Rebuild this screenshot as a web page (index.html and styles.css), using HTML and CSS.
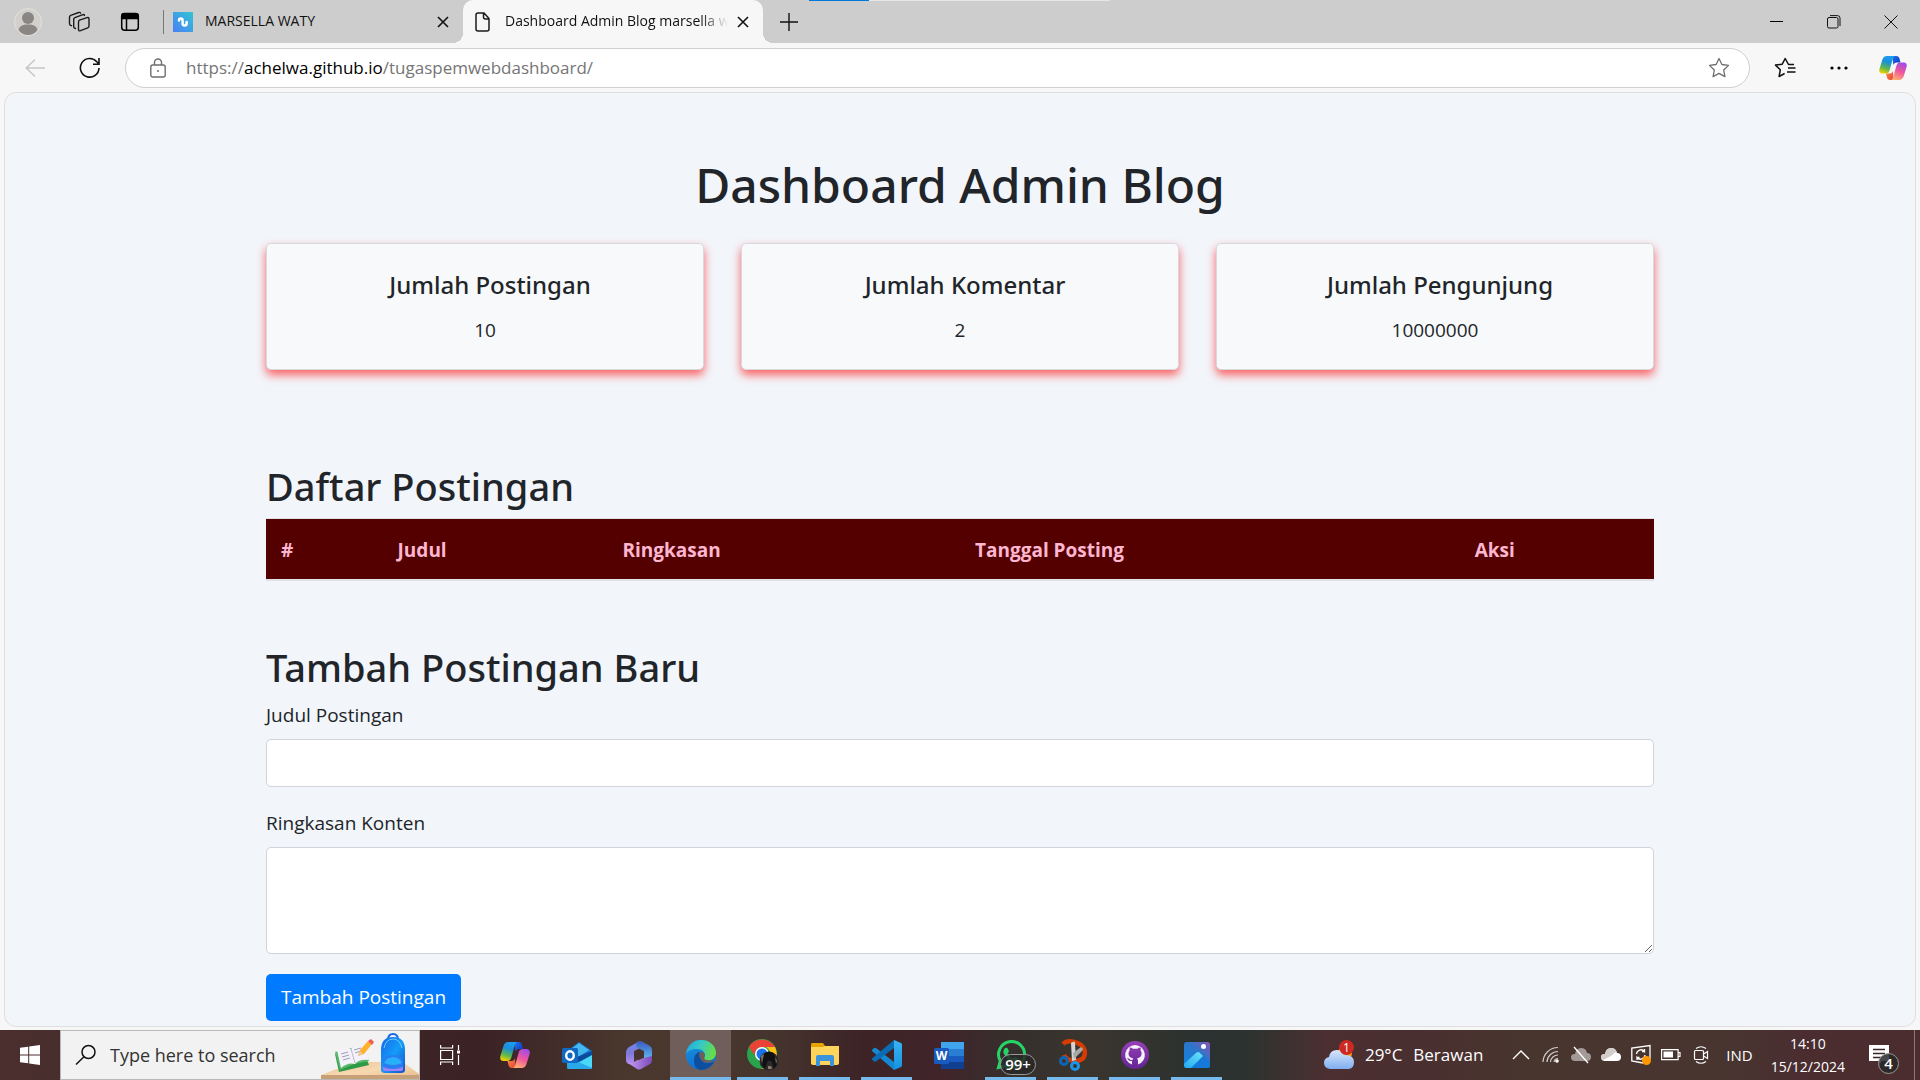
FILE: index.html
```html
<!DOCTYPE html>
<html lang="id">
<head>
<meta charset="utf-8">
<meta name="viewport" content="width=device-width, initial-scale=1">
<title>Dashboard Admin Blog marsella waty</title>
<link rel="stylesheet" href="styles.css">
</head>
<body>
<svg class="defs" aria-hidden="true">
  <defs>
    <linearGradient id="cpA" x1="0.6" y1="0" x2="0.3" y2="1"><stop offset="0" stop-color="#1a9df0"/><stop offset="0.35" stop-color="#1b8fd8"/><stop offset="0.7" stop-color="#5fb84c"/><stop offset="1" stop-color="#f7d000"/></linearGradient>
    <linearGradient id="cpB" x1="0.7" y1="0" x2="0.3" y2="1"><stop offset="0" stop-color="#a04be8"/><stop offset="0.5" stop-color="#f0569c"/><stop offset="1" stop-color="#ffb070"/></linearGradient>
    <linearGradient id="cpC" x1="0" y1="0" x2="1" y2="1"><stop offset="0" stop-color="#2277ee"/><stop offset="1" stop-color="#0a2fc0"/></linearGradient>
    <linearGradient id="cpD" x1="0" y1="0" x2="1" y2="1"><stop offset="0" stop-color="#ff8a3c"/><stop offset="1" stop-color="#e8433c"/></linearGradient>
    <symbol id="copilot" viewBox="0 0 30 28">
      <path d="M14 1h4.500c2 0 3 1 3.500 3l1 4h-4c-2 0-3 1-3.500 3z" fill="url(#cpC)"/>
      <path d="M15.500 27H12c-2 0-3-1-3.500-3l-1-4h4c2 0 3-1 3.500-3z" fill="url(#cpD)"/>
      <path d="M8.500 1H17c-1.500 1-2 2-2.500 4l-3 11c-.8 3-2 4-4.500 4H3.500C.8 20-.4 18 .4 15L3.500 5C4.300 2.500 6 1 8.500 1z" fill="url(#cpA)"/>
      <path d="M21.500 27H13c1.500-1 2-2 2.500-4l3-11c.8-3 2-4 4.500-4h3.500c2.700 0 3.900 2 3.100 5l-3.100 10c-.8 2.500-2.500 4-5 4z" fill="url(#cpB)"/>
    </symbol>
    <linearGradient id="fav" x1="1" y1="0" x2="0" y2="1"><stop offset="0" stop-color="#31c4d4"/><stop offset="1" stop-color="#4a7ff5"/></linearGradient>
    <linearGradient id="edA" x1="0" y1="0" x2="1" y2="0.3"><stop offset="0" stop-color="#1ea5e0"/><stop offset="0.5" stop-color="#34c8c8"/><stop offset="1" stop-color="#64dc4c"/></linearGradient>
    <linearGradient id="edB" x1="0" y1="0" x2="0.4" y2="1"><stop offset="0" stop-color="#1a94e0"/><stop offset="1" stop-color="#0c6fd0"/></linearGradient>
    <linearGradient id="m3A" x1="0" y1="0" x2="0" y2="1"><stop offset="0" stop-color="#6f86e8"/><stop offset="0.5" stop-color="#7f78dc"/><stop offset="1" stop-color="#b890f0"/></linearGradient>
    <linearGradient id="m3B" x1="0" y1="0" x2="0" y2="1"><stop offset="0" stop-color="#3a58c0"/><stop offset="1" stop-color="#62c4f4"/></linearGradient>
    <linearGradient id="m3C" x1="0" y1="0" x2="1" y2="0"><stop offset="0" stop-color="#c89af4"/><stop offset="1" stop-color="#7a4ab8"/></linearGradient>
    <linearGradient id="vs" x1="0" y1="0" x2="0" y2="1"><stop offset="0" stop-color="#3bb4f4"/><stop offset="1" stop-color="#1592e0"/></linearGradient>
    <linearGradient id="gh" x1="0" y1="0" x2="0" y2="1"><stop offset="0" stop-color="#9640b8"/><stop offset="1" stop-color="#642494"/></linearGradient>
    <linearGradient id="phA" x1="0" y1="1" x2="1" y2="0"><stop offset="0" stop-color="#0b86e0"/><stop offset="0.6" stop-color="#2f74c8"/><stop offset="1" stop-color="#8a55b8"/></linearGradient>
    <linearGradient id="phB" x1="0" y1="1" x2="1" y2="0"><stop offset="0" stop-color="#22a8f0"/><stop offset="1" stop-color="#6ce4fc"/></linearGradient>
    <linearGradient id="cl" x1="0" y1="0" x2="0" y2="1"><stop offset="0" stop-color="#d8e6fc"/><stop offset="1" stop-color="#80aef0"/></linearGradient>
    <linearGradient id="bag" x1="0" y1="0" x2="1" y2="1"><stop offset="0" stop-color="#1666e8"/><stop offset="0.5" stop-color="#149cf8"/><stop offset="1" stop-color="#1450c8"/></linearGradient>
    <linearGradient id="desk" x1="0" y1="0" x2="1" y2="1"><stop offset="0" stop-color="#e8c49c"/><stop offset="0.5" stop-color="#f8d8b0"/><stop offset="1" stop-color="#e4b888"/></linearGradient>
  </defs>
</svg>

<header class="browser">
  <div class="tabstrip">
    <div class="load-line"></div>
    <div class="tools">
      <button class="tool" aria-label="Profile"><svg width="28" height="28" viewBox="0 0 28 28"><circle cx="14" cy="14" r="13.500" fill="#d2d0cd" stroke="#e4e2d8"/><circle cx="14" cy="10" r="6" fill="#8a8684"/><path d="M4.500 22c1-4 4-5.500 9.500-5.500s8.500 1.500 9.500 5.500C21 25.500 18 27 14 27s-7-1.500-9.500-5z" fill="#8a8684"/></svg></button>
      <button class="tool" aria-label="Workspaces"><svg width="22" height="22" viewBox="0 0 22 22" fill="none" stroke="#1b1b1b" stroke-width="1.400" stroke-linejoin="round" stroke-linecap="round"><path d="M11.500 9.200l7.500-2.600q2-.6 2 1.300v7q0 1.400-1.300 1.900l-7.200 2.900q-2 .7-2-1.400v-6.900q0-1.600 1-2.200zM7.500 17.500l-1-.4q-.8-.3-.8-1.700V8.600q0-1.500 1.200-2l8-3q1.500-.5 1.500.8M3.500 14.700l-1-.4q-1-.4-1-1.800V6.300q0-1.500 1.200-2l8-2.800q1.500-.5 1.800.6"/></svg></button>
      <button class="tool" aria-label="Tab actions"><svg width="20" height="20" viewBox="0 0 20 20" fill="none" stroke="#000" stroke-width="1.500"><rect x="1.700" y="1.700" width="16.600" height="16.600" rx="3"/><path d="M6.500 6v12"/><path d="M1.700 6.500V4q0-2.500 2.500-2.500h11.600q2.500 0 2.500 2.500v2.500z" fill="#000"/></svg></button>
    </div>
    <div class="tab">
      <svg width="20" height="20" viewBox="0 0 20 20"><path d="M0 0h20v20H0z" fill="url(#fav)"/><path d="M6 8.500q0-2 1.800-2t1.800 2v3q0 2 2 2t2-2v-1.500" fill="none" stroke="#fff" stroke-width="2.500" stroke-linecap="round"/></svg>
      <span class="tab-title">MARSELLA WATY</span>
      <button class="tab-close" aria-label="Close tab"><svg width="12" height="12" viewBox="0 0 12 12" stroke="#111" stroke-width="1.600"><path d="M1 1l10 10M11 1L1 11"/></svg></button>
    </div>
    <div class="tab tab-active">
      <svg width="20" height="20" viewBox="0 0 20 20" fill="none" stroke="#1b1b1b" stroke-width="1.500"><path d="M5 1h6l5 5.500V17q0 2-2 2H5q-2 0-2-2V3q0-2 2-2zM10.500 1v4q0 2 2 2H16" stroke-linejoin="round"/></svg>
      <span class="tab-title">Dashboard Admin Blog marsella waty</span>
      <button class="tab-close" aria-label="Close tab"><svg width="12" height="12" viewBox="0 0 12 12" stroke="#111" stroke-width="1.600"><path d="M1 1l10 10M11 1L1 11"/></svg></button>
    </div>
    <button class="new-tab" aria-label="New tab"><svg width="18" height="18" viewBox="0 0 18 18" stroke="#111" stroke-width="1.400"><path d="M9 0v18M0 9h18"/></svg></button>
    <div class="window-buttons">
      <button aria-label="Minimize"><svg width="14" height="14" viewBox="0 0 14 14"><path d="M0 6.500h13" stroke="#000"/></svg></button>
      <button aria-label="Restore"><svg width="14" height="14" viewBox="0 0 14 14" fill="none" stroke="#111"><rect x=".5" y="2.500" width="10.500" height="10.500" rx="1.500"/><path d="M3 .6h7.500q2.500 0 2.500 2.500v8"/></svg></button>
      <button aria-label="Close"><svg width="14" height="14" viewBox="0 0 14 14" stroke="#111"><path d="M.5.5l13 13M13.500.5l-13 13"/></svg></button>
    </div>
  </div>
  <div class="toolbar">
    <button class="nav" aria-label="Back"><svg width="20" height="20" viewBox="0 0 20 20" fill="none" stroke="#c6c6c6" stroke-width="1.400"><path d="M20 10H1M10 1.500L1.200 10l8.800 8.500"/></svg></button>
    <button class="nav" aria-label="Refresh"><svg width="22" height="22" viewBox="0 0 22 22" fill="none" stroke="#111" stroke-width="1.600"><path d="M20 11a9.300 9.300 0 1 1-2.200-6.200L20 7M20 1v6.200h-6"/></svg></button>
    <div class="address">
      <svg width="16" height="20" viewBox="0 0 16 20" fill="none" stroke="#6e6e6e" stroke-width="1.400"><rect x=".8" y="7" width="14.400" height="12" rx="2"/><path d="M4.500 7V4.500a3.500 3.500 0 0 1 7 0V7"/><circle cx="8" cy="13" r="1" fill="#6e6e6e" stroke="none"/></svg>
      <div class="url" role="textbox" aria-label="Address">https://<span class="url-host">achelwa.github.io</span>/tugaspemwebdashboard/</div>
      <button class="star" aria-label="Add to favorites"><svg width="22" height="22" viewBox="0 0 22 22" fill="none" stroke="#6e6e6e" stroke-width="1.300" stroke-linejoin="round"><path d="M11 1.500l2.900 6 6.600.9-4.800 4.600 1.200 6.600L11 16.400l-5.900 3.200 1.200-6.600L1.500 8.400l6.600-.9z"/></svg></button>
    </div>
    <button class="side" aria-label="Favorites"><svg width="22" height="22" viewBox="0 0 22 22" fill="none" stroke="#111" stroke-width="1.500" stroke-linejoin="round"><path d="M20 7.500h-5.500L11.200 1.500 8.200 7.200l-6.700.9 4.800 4.700-1.200 6.700 5.500-3M14 11h7.500M13 15h8.500"/></svg></button>
    <button class="side" aria-label="Settings and more"><svg width="18" height="4" viewBox="0 0 18 4"><circle cx="2" cy="2" r="1.600"/><circle cx="9" cy="2" r="1.600"/><circle cx="16" cy="2" r="1.600"/></svg></button>
    <button class="side" aria-label="Copilot"><svg width="28" height="26"><use href="#copilot"/></svg></button>
  </div>
</header>

<div class="viewport">
  <main class="page">
    <h1>Dashboard Admin Blog</h1>
    <section class="stats">
      <article class="card"><h5>Jumlah Postingan</h5><p>10</p></article>
      <article class="card"><h5>Jumlah Komentar</h5><p>2</p></article>
      <article class="card"><h5>Jumlah Pengunjung</h5><p>10000000</p></article>
    </section>
    <section class="posts">
      <h2>Daftar Postingan</h2>
      <table>
        <colgroup><col class="col-no"><col class="col-title"><col class="col-summary"><col class="col-date"><col></colgroup>
        <thead><tr><th scope="col">#</th><th scope="col">Judul</th><th scope="col">Ringkasan</th><th scope="col">Tanggal Posting</th><th scope="col">Aksi</th></tr></thead>
      </table>
    </section>
    <section>
      <h2>Tambah Postingan Baru</h2>
      <form>
        <div class="field"><label for="judul">Judul Postingan</label><input type="text" id="judul"></div>
        <div class="field"><label for="ringkasan">Ringkasan Konten</label><textarea id="ringkasan" rows="3"></textarea></div>
        <button class="submit" type="submit">Tambah Postingan</button>
      </form>
    </section>
  </main>
</div>

<footer class="taskbar">
  <button class="start" aria-label="Start"><svg width="20" height="20" viewBox="0 0 20 20" fill="#fff"><path d="M0 2.800L8.200 1.700v7.800H0zM9.200 1.500L20 0v9.500H9.200zM0 10.500h8.200v7.800L0 17.200zM9.200 10.500H20V20L9.200 18.500z"/></svg></button>
  <div class="search">
    <svg width="22" height="22" viewBox="0 0 22 22" fill="none" stroke="#111" stroke-width="1.500"><circle cx="13.500" cy="8" r="6.500"/><path d="M9 12.700L1 20.500"/></svg>
    <input type="text" placeholder="Type here to search" aria-label="Type here to search">
    <svg class="art" width="98" height="48" viewBox="0 0 98 48">
      <path d="M0 44l34-13h48l16 12v5H0z" fill="url(#desk)"/><path d="M0 44h98v4H0z" fill="#c8a078"/>
      <path d="M14 23l4 18 30-7-2-5z" fill="#2e9a48"/><path d="M14 21l16-4 14-3 4 16-15 3-14 6z" fill="#58b868"/>
      <path d="M16 19q9-4 14-1 4-5 15-4l3 15q-10-1-14 4-7-2-14 4z" fill="#f4f2f8"/><path d="M30 18l4 14" stroke="#b8b8d0" fill="none"/><path d="M20 23l7-2M21 26l7-2M22 29l7-2M33 19l7-2M34 22l6-2" stroke="#9c9cbc" fill="none"/>
      <path d="M37 25l2-6 8-9 4 3-8 10z" fill="#ffb02c"/><path d="M47 10l3-2 3 3-2 3z" fill="#f05a50"/><path d="M37 25l2-5 3 3z" fill="#e8c8a8"/>
      <path d="M67 9q0-6 5-6t5 6" stroke="#1a6ae8" stroke-width="2" fill="none"/>
      <path d="M60 39V19Q60 6 72 6t12 13v20q0 3-4 3H64q-4 0-4-3z" fill="url(#bag)"/>
      <path d="M63 17q2-9 9-9t9 9" stroke="#6ac8fc" fill="none"/><path d="M62 38V32q0-8 10-8t10 8v6q0 2-3 2H65q-3 0-3-2z" fill="#2a7cf0"/><path d="M63 32q3-6 9-6t9 6q-9 4-18 0z" fill="#26b0fa"/><path d="M62 36q10 4 20 0v2q0 2-3 2H65q-3 0-3-2z" fill="#a080f4"/>
    </svg>
  </div>
  <nav class="apps" aria-label="Taskbar">
    <button class="app task-view" aria-label="Task View"><svg width="20" height="20" viewBox="0 0 20 20" fill="none" stroke="#fff" stroke-width="1.200"><path d="M.6 0v3h12V0M.6 20v-3h12v3M.6 5.500h12v9H.6zM18.500 0v5M18.500 10v10"/><path d="M17 5.500h3v3h-3z" fill="#fff" stroke="none"/></svg></button>
    <button class="app" aria-label="Copilot"><svg width="30" height="28"><use href="#copilot"/></svg></button>
    <button class="app" aria-label="Outlook"><svg width="30" height="28" viewBox="0 0 30 28"><path d="M5 10L17 1l13 9v16q0 2-2 2H7q-2 0-2-2z" fill="#1a78d0"/><path d="M8 9l9-7 10 7-11 7z" fill="#45b8f0"/><path d="M15 16l15-6v5L9 24z" fill="#0c4a9c"/><path d="M5 28l25-14v12q0 2-2 2z" fill="#4ad8f8"/><path d="M5 16l25 11q-1 1-2 1H7q-2 0-2-2z" fill="#2aa8ec"/><rect y="7" width="16" height="15" rx="1.500" fill="#1068c0"/><ellipse cx="8" cy="14.500" rx="3.800" ry="4.300" fill="none" stroke="#fff" stroke-width="2.400"/></svg></button>
    <button class="app" aria-label="Microsoft 365"><svg width="28" height="30" viewBox="0 0 28 30"><path d="M15 1L4 7Q1 9 1 12v8q0 3 3 4l5 1V11l8-4z" fill="url(#m3A)"/><path d="M12 2q3-2 6 0l7 4q2 1.500 2 4v11l-8-2v-8L11 7z" fill="url(#m3B)"/><path d="M3 23q4 1 6-1l5-3 13-3v4q0 3-2 4l-9 5q-2 1-4 0z" fill="url(#m3C)"/><path d="M14 10l4.500 2.500v5L14 20l-4.500-2.500v-5z" fill="#46332e"/></svg></button>
    <button class="app app-active" aria-label="Microsoft Edge"><svg width="30" height="30" viewBox="0 0 30 30"><circle cx="15" cy="15" r="15" fill="url(#edB)"/><path d="M0 14C1 6 7 0 15 0c9 0 15 6 15 13 0 5-4 7.500-8 7.500-3 0-4-1-4-2 0-.8 1-1.500 1-3.500 0-3-3-6-8-6-5 0-10 2-11 5z" fill="url(#edA)"/><path d="M8 21c0-5 2-8 5-9 3-.5 5 1 5.500 3-1.500-.7-6 3.500-1 7 3 2 7 1 9.500 0 1-.3 1 .5.500 1C25 27 20 30 15 30c-4 0-7-4-7-9z" fill="#0d4f9e"/><path d="M13 12.500q3-1.500 5.500 1.500.5 2-.5 4 1 2.500 5 2.500h3l1.500 1q-8 3-12-1-3-4-2.500-8z" fill="#705e5a"/></svg></button>
    <button class="app app-open" aria-label="Google Chrome"><svg width="32" height="32" viewBox="0 0 32 32"><circle cx="15" cy="15" r="15" fill="#2ba24c"/><path d="M2 8A15 15 0 0 1 28 8H15a7 7 0 0 0-7 9z" fill="#ea4335"/><path d="M28 8a15 15 0 0 1-13 22l7-12a7 7 0 0 0-3-10z" fill="#fbc116"/><circle cx="15" cy="15" r="7" fill="#fff"/><circle cx="15" cy="15" r="5.500" fill="#1a73e8"/><circle cx="22" cy="22" r="9.500" fill="#2a2a2a"/><path d="M17 15q5-5 10 0l3 10-3 5-2-7q-3-3-5 0l-2 7-3-4z" fill="#111"/><path d="M14 17l3-2-2 9zM28 18l2 4-1 3z" fill="#75766c"/><path d="M21 27h3l1 3h-4z" fill="#8d7a68"/></svg></button>
    <button class="app app-open" aria-label="File Explorer"><svg width="28" height="26" viewBox="0 0 28 26"><path d="M0 3q0-2 1-2h11l2 3h12q2 0 2 2v16H0z" fill="#e8a400"/><path d="M0 5h12l2-1h14v17q0 2-2 2H2q-2 0-2-2z" fill="#ffd45c"/><path d="M5 24v-9q0-2 2-2h14q2 0 2 2v9h-4v-5H9v5z" fill="#3a94dc"/></svg></button>
    <button class="app app-open" aria-label="Visual Studio Code"><svg width="30" height="30" viewBox="0 0 30 30"><path d="M0 10l2-2q1-.5 2 0l18 14v8L0 11z" fill="#1488d0"/><path d="M0 19.500l2 2q1 .7 2 0L22 8V0L0 18.500z" fill="#0a6cb4"/><path d="M22 0l7 3q1 .5 1 2v20q0 1.500-1 2l-7 3z" fill="url(#vs)"/></svg></button>
    <button class="app" aria-label="Word"><svg width="30" height="28" viewBox="0 0 30 28"><path d="M7 1h23v7H7z" fill="#41a5ee"/><path d="M7 8h23v7H7z" fill="#2b7cd3"/><path d="M7 15h23v6H7z" fill="#185abd"/><path d="M7 21h23v7H7z" fill="#103f91"/><rect y="7" width="15" height="16" rx="1.500" fill="#185abd"/><text x="7.500" y="19" text-anchor="middle" font-size="12" font-weight="700" fill="#fff">W</text></svg></button>
    <button class="app app-open" aria-label="WhatsApp"><svg width="30" height="30" viewBox="0 0 30 30"><path d="M2.500 27.500l1.800-6.500A13 13 0 1 1 9.500 26z" fill="none" stroke="#25d366" stroke-width="3"/><path d="M9 8q2-1 3 1l1 2.500-1.500 2q2 3.500 5.500 5l2-2 3.500 2q0 3-3.500 3.500-8-1-11.500-9-.5-3 1.500-5z" fill="#25d366"/></svg><span class="count">99+</span></button>
    <button class="app app-open" aria-label="Snipping Tool"><svg width="28" height="32" viewBox="0 0 28 32"><path d="M4 5Q8 1 15 3q10 2 11 10 0 9-10 9-9-1-11-6" fill="none" stroke="#d83b01" stroke-width="4.500"/><path d="M12 4q4-3 4 0l1 17-4 1z" fill="#d4d4d4"/><path d="M15 20l-1-6 8-6q3 1 1 4z" fill="#a8a8a8"/><circle cx="5" cy="22" r="3.500" fill="none" stroke="#0c66b8" stroke-width="3"/><circle cx="16" cy="27" r="3.500" fill="none" stroke="#1a94e8" stroke-width="3"/></svg></button>
    <button class="app app-open" aria-label="GitHub Desktop"><svg width="28" height="28" viewBox="0 0 28 28"><circle cx="14" cy="14" r="14" fill="url(#gh)"/><path d="M14 4A10 10 0 0 0 11 23.500V20q-3 .5-4-1.500l-1-1.500q2 0 3 1.500 1 .8 2.500.4l.7-1.500C9 17 7.500 15 7.500 12.500q0-2 1.200-3-.4-1.500.2-3 1.500 0 3 1.200h4.500q1.500-1.200 3-1.200.6 1.500.2 3 1 1.200 1 3c0 2.500-1.500 4.500-4.600 4.900q1 1 1 2.600v3.500A10 10 0 0 0 14 4z" fill="#f6f0fa"/></svg></button>
    <button class="app app-open" aria-label="Photos"><svg width="26" height="26" viewBox="0 0 26 26"><rect width="26" height="26" rx="2.500" fill="url(#phA)"/><path d="M13 10q1.500-1 3 0l10 11v2q0 3-3 3H3z" fill="#1479d8"/><path d="M0 22L12.500 10.500q1.500-1 3 0L19 14 7 26H3q-3 0-3-3z" fill="url(#phB)"/><circle cx="19.500" cy="4.500" r="2.500" fill="#fff"/></svg></button>
  </nav>
  <div class="tray">
    <button class="weather"><svg width="30" height="30" viewBox="0 0 30 30"><circle cx="21" cy="13" r="7" fill="#f8a018"/><path d="M6 29q-6-1-6-6 0-5 5-6 1-7 8-7 6 0 8 5 9 0 9 7 0 6-5 7z" fill="url(#cl)"/><circle cx="22.500" cy="7.500" r="7.500" fill="#cc2a20"/><text x="22.500" y="12" text-anchor="middle" font-size="12" fill="#fff">1</text></svg><span>29°C</span><span>Berawan</span></button>
    <div class="status">
      <svg width="20" height="20" viewBox="0 0 20 20" fill="none" stroke="#fff" stroke-width="1.400"><path d="M2 14l8-8 8 8"/></svg>
      <svg width="20" height="20" viewBox="0 0 20 20" fill="none" stroke="#d0cac8" stroke-width="1.200"><path d="M2 17A15 15 0 0 1 17 2.500M6 17A11 11 0 0 1 17 6.500M9.500 17A7.500 7.500 0 0 1 17 10M13 17a4 4 0 0 1 4-3.500"/><circle cx="16" cy="16" r="1.800" fill="#fff" stroke="none"/></svg>
      <svg width="20" height="20" viewBox="0 0 20 20"><path d="M4 16q-4 0-4-4 0-3 4-3 1-6 6-6 5 0 6 5 4 0 4 4t-4 4z" fill="#a39a97"/><path d="M3 2l14 16" stroke="#fff" stroke-width="1.300"/></svg>
      <svg width="20" height="20" viewBox="0 0 20 20"><path d="M4 16q-4 0-4-4 0-3 4-3 1-6 6-6 5 0 6 5 4 0 4 4t-4 4z" fill="#fff"/><path d="M0 12q0-3 4-3 1-6 6-6 4 0 5.500 4Q13 7 12 9.500q-4 3-10 5.500-2-1-2-3z" fill="#d2cdca"/></svg>
      <svg width="20" height="22" viewBox="0 0 20 22" fill="none" stroke="#fff" stroke-width="1.300"><path d="M12 19L.8 17V4L19 1.500V15"/><path d="M5.500 10a4.500 4.500 0 0 1 8-2.500V5M13.500 7.500H11M14 11a4.500 4.500 0 0 1-8 2.500V16M6 13.500h2.500"/><circle cx="15.500" cy="16.500" r="4.500" fill="#ff9800" stroke="none"/></svg>
      <svg width="20" height="20" viewBox="0 0 20 20"><path d="M.6 4.600h16.500v10H.6zM17 7.500h2v4h-2" fill="none" stroke="#fff" stroke-width="1.200"/><path d="M2.500 6.500h9.500v6H2.500z" fill="#fff"/></svg>
      <svg width="20" height="20" viewBox="0 0 20 20" fill="none" stroke="#fff" stroke-width="1.200"><rect x="3.500" y="5.500" width="9" height="9" rx="1"/><path d="M12.500 9l4-2.500v7l-4-2.500M5 3.500Q10 0 15 3.500M5 16.500q5 3.500 10 0"/></svg>
      <span class="lang">IND</span>
    </div>
    <div class="clock"><time>14:10</time><time>15/12/2024</time></div>
    <button class="notify" aria-label="Notifications"><svg width="20" height="20" viewBox="0 0 20 20"><path d="M0 0h20v16h-7l-3 4v-4H0z" fill="#fff"/><path d="M4 4.500h12M4 8.500h12M4 12.500h8" stroke="#3a2626" stroke-width="1.300"/></svg><span class="badge">4</span></button>
  </div>
</footer>
</body>
</html>
```
FILE: styles.css
```css
*, *::before, *::after { box-sizing: border-box; }

body {
  margin: 0;
  height: 100vh;
  display: flex;
  flex-direction: column;
  background: #f7f7f7;
  color: #212529;
  font-family: "Open Sans", "Noto Sans", sans-serif;
  font-size: 19px;
  line-height: 30px;
  overflow: hidden;
}

button, input, textarea { font: inherit; color: inherit; }
button {
  padding: 0;
  border: 0;
  background: none;
  display: flex;
  align-items: center;
  justify-content: center;
}
svg { display: block; flex: none; }
h1, h2, h5, p { margin: 0; }
.defs { position: absolute; width: 0; height: 0; }

/* Tab strip */
.tabstrip {
  position: relative;
  display: flex;
  align-items: center;
  height: 43px;
  background: #cdcdcd;
  font-size: 14px;
  line-height: 20px;
  color: #111;
}
.load-line {
  position: absolute;
  top: 0;
  left: 809px;
  width: 301px;
  height: 1px;
  background: linear-gradient(90deg, #0078d7 60px, #e6e6e6 60px);
}
.tools { display: flex; align-items: center; padding-left: 2px; }
.tool { width: 51px; height: 43px; }
.tab {
  position: relative;
  display: flex;
  align-items: center;
  flex: 0 1 300px;
  min-width: 0;
  height: 43px;
  padding: 0 13px 0 10px;
}
.tools + .tab { margin-left: 8px; }
.tools + .tab::before {
  content: "";
  position: absolute;
  left: 0;
  top: 10px;
  width: 1px;
  height: 24px;
  background: #777;
}
.tab-title {
  flex: 1;
  min-width: 0;
  margin: 0 8px 2px 12px;
  overflow: hidden;
  white-space: nowrap;
}
.tab-close { width: 14px; height: 20px; }
.tab-active { background: #f7f7f7; border-radius: 10px 10px 0 0; }
.tab-active .tab-title {
  -webkit-mask-image: linear-gradient(90deg, #000 calc(100% - 28px), transparent);
  mask-image: linear-gradient(90deg, #000 calc(100% - 28px), transparent);
}
.tab-active::before, .tab-active::after {
  content: "";
  position: absolute;
  bottom: 0;
  width: 10px;
  height: 10px;
}
.tab-active::before { left: -10px; background: radial-gradient(circle at 0 0, #cdcdcd 10px, #f7f7f7 10px); }
.tab-active::after { right: -10px; background: radial-gradient(circle at 100% 0, #cdcdcd 10px, #f7f7f7 10px); }
.new-tab { width: 52px; height: 40px; }
.window-buttons { display: flex; margin-left: auto; padding-right: 1px; }
.window-buttons button { width: 57px; height: 43px; }

/* Toolbar */
.toolbar {
  display: flex;
  align-items: center;
  height: 49px;
  padding-left: 7px;
}
.nav { width: 55px; height: 40px; }
.address {
  flex: 1;
  display: flex;
  align-items: center;
  height: 40px;
  margin: 0 8px;
  padding: 0 19px 0 24px;
  background: #fff;
  border: 1px solid #cfcfcf;
  border-radius: 20px;
}
.url { flex: 1; margin-left: 20px; color: #757575; font-size: 17px; white-space: nowrap; }
.url-host { color: #000; }
.side { width: 54px; height: 40px; }

/* Page area */
.viewport {
  flex: 1;
  min-height: 0;
  margin: 0 4px 3px;
  background: #f2f5fa;
  border: 1px solid #dfdfdf;
  border-radius: 12px;
  overflow: hidden;
}
.page {
  max-width: 1418px;
  margin: 0 auto;
  padding: 62px 15px 0;
}
h1, h2, h5 { font-family: "Noto Sans", "Open Sans", sans-serif; font-weight: 500; }
h1 {
  margin-bottom: 28px;
  font-size: 48px;
  line-height: 60px;
  text-align: center;
}
h2 { margin-bottom: 8px; font-size: 38px; line-height: 48px; }
h5 { margin-bottom: 15px; padding-left: 10px; font-size: 24px; line-height: 30px; }

.stats {
  display: grid;
  grid-template-columns: repeat(3, 1fr);
  gap: 37px;
}
.card {
  padding: 26px 25px 24px;
  background: #f8f9fb;
  border: 1px solid #d8d9dc;
  border-radius: 5px;
  text-align: center;
  box-shadow: 0 5px 10px rgba(255, 0, 0, .6);
}
.posts { margin: 92px 0 62px; }
table {
  width: 100%;
  table-layout: fixed;
  border-collapse: collapse;
}
.col-no { width: 8.4%; }
.col-title { width: 16.2%; }
.col-summary { width: 25.4%; }
.col-date { width: 36%; }
th {
  padding: 16px 15px 14px;
  background: #540000;
  border-top: 1px solid #dee2e6;
  border-bottom: 2px solid #dee2e6;
  color: #ffb6d0;
  font-weight: 700;
  text-align: left;
}
.field { margin-bottom: 20px; }
label { display: block; margin-bottom: 9px; padding-top: 1px; }
.field input, textarea {
  display: block;
  width: 100%;
  padding: 8px 15px;
  background: #fff;
  border: 1px solid #ced4da;
  border-radius: 5px;
}
.field input { height: 48px; }
.field textarea { padding: 7px 15px; min-height: 107px; }
.submit {
  padding: 8px 15px 9px;
  background: #007bff;
  border-radius: 5px;
  color: #fff;
}

/* Taskbar */
.taskbar {
  display: flex;
  flex: none;
  height: 50px;
  background: linear-gradient(90deg, #4a2f2e 0, #3b2225 25%, #4a382e 33%, #46352e 40%, #3d2326 45%, #40242a 49%, #36302d 53%, #3a352e 57%, #2a3130 63%, #2d3330 65%, #4b2f31 69%, #4a2f30 74%, #48352e 79%, #483530 90%, #4b2d30 94%, #4b2d2e 100%);
  color: #fff;
}
.start { width: 60px; }
.search {
  display: flex;
  align-items: center;
  width: 360px;
  padding-left: 14px;
  background: #f2f2f2;
  border: 1px solid #b8b8b8;
}
.search input {
  flex: 1;
  min-width: 0;
  margin-left: 13px;
  padding: 0;
  border: 0;
  background: none;
  font-size: 18px;
}
.search input::placeholder { color: #333; opacity: 1; }
.apps { display: flex; }
.app { position: relative; width: 61px; margin-right: 1px; }
.app.task-view { width: 60px; margin-right: 4px; }
.app-active { background: linear-gradient(#76b9ed, #76b9ed) bottom / 100% 3px no-repeat #705e5a; }
.app-open { background: linear-gradient(#76b9ed, #76b9ed) bottom / 51px 3px no-repeat; }
.count, .badge {
  position: absolute;
  background: rgba(40, 40, 40, .85);
  border: 1px solid #999;
  border-radius: 11px;
  font-size: 15px;
  font-weight: 600;
  line-height: 19px;
  text-align: center;
}
.count { left: 20px; top: 24px; width: 36px; }
.tray { display: flex; align-items: center; margin-left: auto; padding-right: 5px; }
.weather { gap: 11px; margin-right: 28px; font-size: 17px; }
.status { display: flex; align-items: center; gap: 10px; }
.lang { margin-left: 5px; font-size: 15px; }
.clock {
  display: flex;
  flex-direction: column;
  align-items: center;
  margin: 0 24px 0 18px;
  font-size: 14px;
  line-height: 23px;
}
.notify {
  position: relative;
  width: 46px;
  height: 50px;
  justify-content: flex-start;
  border-right: 1px solid #8c7a7a;
}
.badge { left: 9px; top: 23px; width: 21px; }
```
